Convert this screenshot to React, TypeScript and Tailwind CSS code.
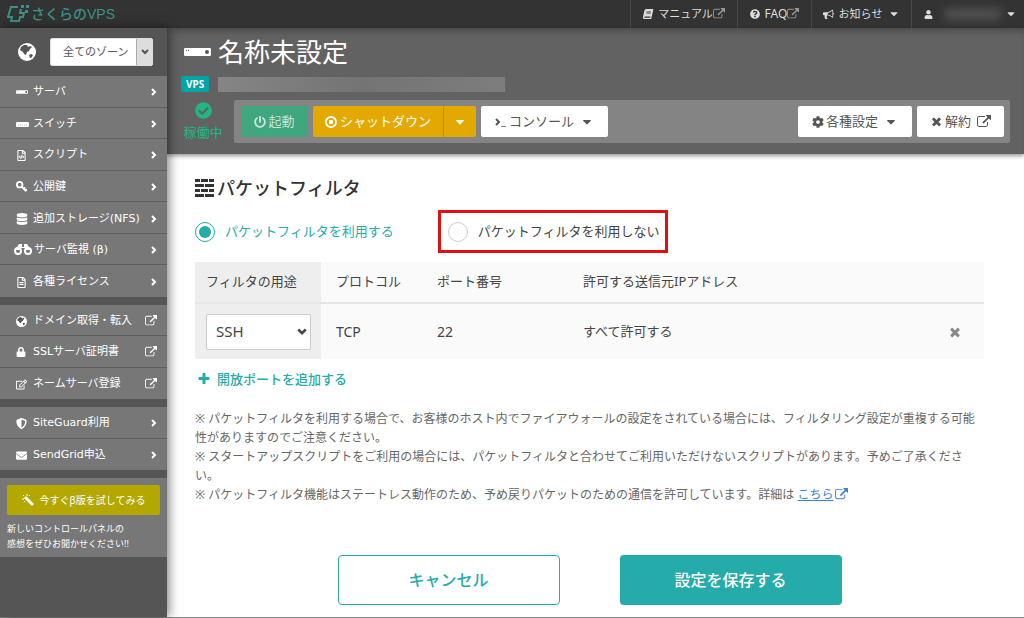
import { useState } from "react";
import type { ReactNode } from "react";
import {
  FaBook,
  FaCheckCircle,
  FaCog,
  FaDatabase,
  FaEnvelope,
  FaLock,
  FaPowerOff,
  FaQuestionCircle,
  FaRegEdit,
  FaRegFileAlt,
  FaRegFileCode,
  FaShieldAlt,
  FaUser,
} from "react-icons/fa";

interface MenuItem {
  label: string;
  icon: ReactNode;
  external?: boolean;
}

interface IconProps {
  className?: string;
}

const glyphs = {
  external:
    "M1408 928v320q0 119-84.5 203.5t-203.5 84.5h-832q-119 0-203.5-84.5t-84.5-203.5v-832q0-119 84.5-203.5t203.5-84.5h704q14 0 23 9t9 23v64q0 14-9 23t-23 9h-704q-66 0-113 47t-47 113v832q0 66 47 113t113 47h832q66 0 113-47t47-113v-320q0-14 9-23t23-9h64q14 0 23 9t9 23zm384-864v512q0 26-19 45t-45 19-45-19l-176-176-652 652q-10 10-23 10t-23-10l-114-114q-10-10-10-23t10-23l652-652-176-176q-19-19-19-45t19-45 45-19h512q26 0 45 19t19 45z",
  times:
    "M1490 1322q0 40-28 68l-136 136q-28 28-68 28t-68-28l-294-294-294 294q-28 28-68 28t-68-28l-136-136q-28-28-28-68t28-68l294-294-294-294q-28-28-28-68t28-68l136-136q28-28 68-28t68 28l294 294 294-294q28-28 68-28t68 28l136 136q28 28 28 68t-28 68l-294 294 294 294q28 28 28 68z",
  plus: "M1600 736v192q0 40-28 68t-68 28h-416v416q0 40-28 68t-68 28h-192q-40 0-68-28t-28-68v-416h-416q-40 0-68-28t-28-68v-192q0-40 28-68t68-28h416v-416q0-40 28-68t68-28h192q40 0 68 28t28 68v416h416q40 0 68 28t28 68z",
  caret: "M1408 704q0 26-19 45l-448 448q-19 19-45 19t-45-19l-448-448q-19-19-19-45t19-45 45-19h896q26 0 45 19t19 45z",
  bullhorn:
    "M1664 640q53 0 90.5 37.5t37.5 90.5-37.5 90.5-90.5 37.5v384q0 52-38 90t-90 38q-417-347-812-380-58 19-91 66t-31 100.5 40 92.5q-20 33-23 65.5t6 58 33.5 55 48 50 61.5 50.5q-29 58-111.5 83t-168.5 11.5-132-55.5q-7-23-29.5-87.5t-32-94.5-23-89-15-101 3.5-98.5 22-110.5h-122q-66 0-113-47t-47-113v-192q0-66 47-113t113-47h480q435 0 896-384 52 0 90 38t38 90v384zm-128 604v-954q-394 302-768 343v270q377 42 768 341z",
};

function Glyph({ name, className }: { name: keyof typeof glyphs; className?: string }) {
  return (
    <svg viewBox="0 0 1792 1792" fill="currentColor" className={className} aria-hidden="true">
      <path d={glyphs[name]} />
    </svg>
  );
}

function GlobeIcon({ className }: IconProps) {
  return (
    <svg viewBox="0 0 18 18" className={className} aria-hidden="true">
      <circle cx="9" cy="9" r="9" fill="#fff" />
      <path d="M3 4l3-2 3 0 1 2 2-1 2 1-2 2-1 2-2 1-1 3-2-1-1-2-3-2zM11 12l2-1 2 1-2 3-1 0z" fill="#555" />
    </svg>
  );
}

function BinocularsIcon({ className }: IconProps) {
  return (
    <svg viewBox="0 0 18 12" className={className} aria-hidden="true">
      <path d="M3 3l2-3h3v3h2V0h3l2 3 2 3h-6V4H7v2H1z" fill="#fff" />
      <circle cx="4" cy="7" r="3" fill="none" stroke="#fff" strokeWidth="2" />
      <circle cx="14" cy="7" r="3" fill="none" stroke="#fff" strokeWidth="2" />
    </svg>
  );
}

function KeyIcon({ className }: IconProps) {
  return (
    <svg viewBox="0 0 12 12" fill="none" stroke="#fff" className={className} aria-hidden="true">
      <circle cx="4" cy="4" r="3" strokeWidth="2" />
      <path d="M6 6l5 5M8 9l2-2M10 11l2-2" strokeWidth="2" />
    </svg>
  );
}

function MagicIcon({ className }: IconProps) {
  return (
    <svg viewBox="0 0 12 12" stroke="#fff" className={className} aria-hidden="true">
      <path d="M3 3l8 8" strokeWidth="3" />
      <path d="M1 1l1 1M5 0v2M0 5h2M2 8l1-1M7 2l1-1" />
    </svg>
  );
}

function ServerIcon({ className }: IconProps) {
  return (
    <svg viewBox="0 0 27 8" className={className} aria-hidden="true">
      <rect width="27" height="8" rx="1" fill="#fff" />
      <path d="M2 2h1v1H2zM4 2h1v1H4z" fill="#666" />
      <circle cx="23" cy="4" r="2" fill="#555" />
    </svg>
  );
}

function SwitchIcon({ className }: IconProps) {
  return (
    <svg viewBox="0 0 13 6" className={className} aria-hidden="true">
      <rect width="13" height="5" y="1" rx="1" fill="#fff" />
      <path d="M2 4h9" stroke="#bbb" strokeDasharray="1 1" />
    </svg>
  );
}

function BricksIcon({ className }: IconProps) {
  return (
    <svg viewBox="0 0 19 18" fill="#333" className={className} aria-hidden="true">
      <path d="M0 0h5v3H0zM6 0h7v3H6zM14 0h5v3h-5zM0 5h9v3H0zM10 5h9v3h-9zM0 10h5v3H0zM6 10h7v3H6zM14 10h5v3h-5zM0 15h9v3H0zM10 15h9v3h-9z" />
    </svg>
  );
}

function ChevronIcon({ className }: IconProps) {
  return (
    <svg viewBox="0 0 6 8" fill="none" stroke="currentColor" strokeWidth="2" className={className} aria-hidden="true">
      <path d="M1 1l3 3-3 3" />
    </svg>
  );
}

function LogoMark() {
  return (
    <svg viewBox="0 0 22 18" className="h-[18px] w-[22px]" aria-hidden="true">
      <path d="M11 2H4L1 12h4l-1 4h8l1-4h3l1-4h-4l1-4" fill="none" stroke="#3a9188" strokeWidth="2" />
      <path d="M14 0h3v3h-3zM19 0h3v3h-3zM18 5h3v3h-3z" fill="#3a9188" />
    </svg>
  );
}

const serviceMenu: MenuItem[] = [
  { label: "サーバ", icon: <ServerIcon className="h-1 w-3" /> },
  { label: "スイッチ", icon: <SwitchIcon className="h-[6px] w-[13px]" /> },
  { label: "スクリプト", icon: <FaRegFileCode /> },
  { label: "公開鍵", icon: <KeyIcon className="size-[11px]" /> },
  { label: "追加ストレージ(NFS)", icon: <FaDatabase className="size-3" /> },
  { label: "サーバ監視 (β)", icon: <BinocularsIcon className="-ml-[2px] h-3 w-[18px]" /> },
  { label: "各種ライセンス", icon: <FaRegFileAlt /> },
];

const domainMenu: MenuItem[] = [
  { label: "ドメイン取得・転入", icon: <GlobeIcon className="size-[11px]" />, external: true },
  { label: "SSLサーバ証明書", icon: <FaLock className="size-[10px]" />, external: true },
  { label: "ネームサーバ登録", icon: <FaRegEdit />, external: true },
];

const partnerMenu: MenuItem[] = [
  { label: "SiteGuard利用", icon: <FaShieldAlt /> },
  { label: "SendGrid申込", icon: <FaEnvelope /> },
];

function MenuGroup({ items, className }: { items: MenuItem[]; className: string }) {
  return (
    <ul className={`grid auto-rows-fr divide-y divide-[#5e5e5e] bg-[#777] ${className}`}>
      {items.map((item) => (
        <li key={item.label}>
          <a href="#" className="flex h-full items-center gap-[2px] pt-[2px] pr-[10px] pl-4 text-white">
            <span className="flex min-w-[15px] items-center text-[11px]">{item.icon}</span>
            <span className="grow font-['DejaVu_Sans','Noto_Sans_CJK_JP',sans-serif] text-[11px] leading-4 whitespace-nowrap">
              {item.label}
            </span>
            {item.external ? <Glyph name="external" className="size-3" /> : <ChevronIcon className="h-2 w-[6px]" />}
          </a>
        </li>
      ))}
    </ul>
  );
}

function Sidebar() {
  return (
    <aside className="z-10 flex w-[167px] shrink-0 flex-col gap-2 bg-[#555] shadow-[2px_0_10px_rgba(0,0,0,0.5)]">
      <div>
        <div className="flex h-12 items-center gap-[14px] pl-[18px]">
          <GlobeIcon className="size-[18px]" />
          <button type="button" className="flex h-7 w-[103px] items-stretch rounded-xs border border-[#ddd] bg-white text-[11px] text-[#555]">
            <span className="flex grow items-center pl-3">全てのゾーン</span>
            <span className="flex w-4 items-center justify-center border-l border-[#aaa] bg-[#ddd]">
              <ChevronIcon className="h-2 w-[6px] rotate-90" />
            </span>
          </button>
        </div>
        <MenuGroup items={serviceMenu} className="h-[221px]" />
      </div>
      <MenuGroup items={domainMenu} className="h-[94px]" />
      <MenuGroup items={partnerMenu} className="h-[63px]" />
      <div className="bg-[#777] px-[7px] pt-[7px] pb-[6px] text-white">
        <button type="button" className="flex h-[30px] w-full items-center justify-center gap-[6px] rounded-xs bg-[#b4a800] text-[10px]">
          <MagicIcon className="size-3" />
          今すぐβ版を試してみる
        </button>
        <p className="pt-[6px] text-[9px] leading-[15px] whitespace-nowrap">
          新しいコントロールパネルの
          <br />
          感想をぜひお聞かせください!!
        </p>
      </div>
    </aside>
  );
}

function TopBar() {
  return (
    <header className="flex h-7 shrink-0 items-stretch justify-between bg-[#333] text-[#ddd]">
      <a href="#" className="flex items-center gap-[2px] pl-[7px] text-[#3a9188]">
        <LogoMark />
        <span className="font-['Liberation_Sans','Noto_Sans_CJK_JP',sans-serif] text-[14px] leading-5 font-medium">さくらのVPS</span>
      </a>
      <nav className="flex text-[12px]">
        <a href="#" className="flex w-[107px] items-center justify-center border-l border-[#484848]">
          <FaBook className="mr-[5px] size-[10px] -skew-x-12" />
          <span className="text-[11px]">マニュアル</span>
          <Glyph name="external" className="size-3 text-[#999]" />
        </a>
        <a href="#" className="flex w-[74px] items-center justify-center border-l border-[#484848]">
          <FaQuestionCircle className="mr-[5px] size-[10px]" />
          FAQ
          <Glyph name="external" className="size-3 text-[#999]" />
        </a>
        <button type="button" className="flex w-[100px] items-center justify-center border-l border-[#484848]">
          <Glyph name="bullhorn" className="mr-[5px] size-[11px]" />
          <span className="text-[11px]">お知らせ</span>
          <Glyph name="caret" className="ml-[6px] size-3" />
        </button>
        <button type="button" aria-label="アカウント" className="flex w-[113px] items-center border-l border-[#484848] pl-3">
          <FaUser className="size-[9px]" />
          <span className="ml-3 h-3 w-14 bg-[#505050] blur-xs" />
          <Glyph name="caret" className="ml-1 size-3" />
        </button>
      </nav>
    </header>
  );
}

function ServerHeader() {
  return (
    <section className="bg-[#626262] pr-[14px] pb-[11px] pl-[14px] shadow-[0_2px_4px_rgba(0,0,0,0.4),inset_0_8px_8px_-6px_rgba(0,0,0,0.3)]">
      <h1 className="flex h-12 items-center gap-[7px] pl-[3px] text-[26px] text-white">
        <ServerIcon className="h-2 w-[27px]" />
        名称未設定
      </h1>
      <div className="flex h-4 items-center gap-[9px]">
        <span className="rounded-xs bg-[#00a5a9] px-[5px] text-[10px] leading-4 font-bold text-white">VPS</span>
        <span className="h-[15px] w-[287px] bg-linear-to-r from-[#858585] via-[#747474] to-[#7d7d7d]" />
      </div>
      <div className="flex items-center gap-[9px] pt-2">
        <p className="flex w-11 flex-col items-center text-[13px] leading-[18px] text-[#20b880]">
          <FaCheckCircle className="mb-1 size-[17px]" />
          稼働中
        </p>
        <div className="flex min-w-0 grow items-center justify-between rounded-xs bg-[#848484] py-[6px] pr-[6px] pl-[7px] text-[13px] text-[#555]">
          <div className="flex gap-[5px]">
            <button type="button" className="flex h-[31px] w-[67px] items-center justify-center gap-[2px] rounded-xs bg-[#3fa67e] text-white/70">
              <FaPowerOff className="size-3" />
              起動
            </button>
            <div className="flex h-[31px] divide-x divide-[#b98c00] overflow-hidden rounded-xs bg-[#e4a900] text-white">
              <button type="button" className="flex w-[131px] items-center justify-center gap-[3px]">
                <svg viewBox="0 0 12 12" className="size-3" aria-hidden="true">
                  <circle cx="6" cy="6" r="5" fill="none" stroke="#fff" strokeWidth="2" />
                  <rect x="4" y="4" width="4" height="4" rx="1" fill="#fff" />
                </svg>
                シャットダウン
              </button>
              <button type="button" aria-label="シャットダウンメニュー" className="flex w-8 items-center justify-center">
                <Glyph name="caret" className="size-[14px]" />
              </button>
            </div>
            <button type="button" className="flex h-[31px] w-[127px] items-center justify-center rounded-xs bg-white">
              <ChevronIcon className="h-2 w-[6px]" />
              <span className="text-[11px]">_</span>
              <span className="ml-[3px]">コンソール</span>
              <Glyph name="caret" className="ml-[6px] size-[14px]" />
            </button>
          </div>
          <div className="flex gap-[5px]">
            <button type="button" className="flex h-[31px] w-[114px] items-center justify-center rounded-xs bg-white">
              <FaCog className="mr-[2px] size-3" />
              各種設定
              <Glyph name="caret" className="ml-[6px] size-[14px]" />
            </button>
            <button type="button" className="flex h-[31px] w-[87px] items-center justify-center rounded-xs bg-white">
              <Glyph name="times" className="mr-[2px] size-[13px]" />
              解約
              <Glyph name="external" className="ml-[6px] size-[14px]" />
            </button>
          </div>
        </div>
      </div>
    </section>
  );
}

const radioClass =
  "size-5 shrink-0 appearance-none rounded-full border border-[#ccc] bg-white checked:border-[#25abaa] checked:bg-[#25abaa] checked:bg-clip-content checked:p-[3px]";

function PacketFilter() {
  const [useFilter, setUseFilter] = useState(true);
  const [purpose, setPurpose] = useState("SSH");

  return (
    <main className="pt-5 pr-10 pl-7 text-[13px] text-[#444]">
      <h2 className="flex items-center gap-[3px] text-[18px] leading-7 font-medium text-[#333]">
        <BricksIcon className="h-[18px] w-[19px]" />
        パケットフィルタ
      </h2>

      <div className="flex items-center gap-11 pt-2">
        <label className={`flex items-center gap-[10px] ${useFilter ? "text-[#25abaa]" : ""}`}>
          <input type="radio" name="packet-filter" className={radioClass} checked={useFilter} onChange={() => setUseFilter(true)} />
          パケットフィルタを利用する
        </label>
        <label className={`flex h-[43px] items-center gap-[10px] border-3 border-[#e01010] pr-[5px] pl-[7px] whitespace-nowrap ${useFilter ? "" : "text-[#25abaa]"}`}>
          <input type="radio" name="packet-filter" className={radioClass} checked={!useFilter} onChange={() => setUseFilter(false)} />
          パケットフィルタを利用しない
        </label>
      </div>

      <table className="mt-[9px] w-full table-fixed bg-[#fafafa] text-left">
        <colgroup>
          <col className="w-[126px] bg-[#eee]" />
          <col className="w-[101px]" />
          <col className="w-[146px]" />
          <col />
          <col className="w-[58px]" />
        </colgroup>
        <thead>
          <tr className="h-[41px] border-b-2 border-[#e6e6e6]">
            <th className="pl-[11px] font-normal">フィルタの用途</th>
            <th className="pl-[15px] font-normal">プロトコル</th>
            <th className="pl-[15px] font-normal">ポート番号</th>
            <th className="pl-[15px] font-normal">許可する送信元IPアドレス</th>
            <td />
          </tr>
        </thead>
        <tbody>
          <tr className="h-14">
            <td className="pr-[10px] pl-[11px]">
              <div className="relative">
                <select
                  aria-label="フィルタの用途"
                  value={purpose}
                  onChange={(e) => setPurpose(e.target.value)}
                  className="h-9 w-full appearance-none rounded-xs border border-[#ccc] bg-white pl-[9px] text-[15px]"
                >
                  <option>SSH</option>
                  <option>Web</option>
                  <option>FTP</option>
                </select>
                <ChevronIcon className="pointer-events-none absolute top-[13px] right-[5px] h-[10px] w-2 rotate-90" />
              </div>
            </td>
            <td className="pl-[15px] text-[14px]">TCP</td>
            <td className="pl-[15px] text-[14px]">22</td>
            <td className="pl-[15px]">すべて許可する</td>
            <td>
              <button type="button" aria-label="削除" className="flex w-full justify-center text-[#888]">
                <Glyph name="times" className="size-[14px]" />
              </button>
            </td>
          </tr>
        </tbody>
      </table>

      <button type="button" className="mt-[10px] flex items-center gap-[6px] pl-[2px] leading-5 font-medium text-[#25abaa]">
        <Glyph name="plus" className="size-[14px]" />
        開放ポートを追加する
      </button>

      <p className="mt-5 text-[12px] leading-[19px] text-[#666]">
        ※ パケットフィルタを利用する場合で、お客様のホスト内でファイアウォールの設定をされている場合には、フィルタリング設定が重複する可能性がありますのでご注意ください。
        <br />
        ※ スタートアップスクリプトをご利用の場合には、パケットフィルタと合わせてご利用いただけないスクリプトがあります。予めご了承ください。
        <br />※ パケットフィルタ機能はステートレス動作のため、予め戻りパケットのための通信を許可しています。詳細は{" "}
        <a href="#" className="text-[#3880d8]">
          <span className="underline">こちら</span>
          <Glyph name="external" className="ml-px inline size-[13px] align-[-2px]" />
        </a>
      </p>

      <div className="flex justify-center gap-[60px] pt-[51px] pb-3 text-[16px] font-medium">
        <button type="button" className="h-[50px] w-[222px] rounded-sm border border-[#25abaa] bg-white text-[#25abaa]">
          キャンセル
        </button>
        <button type="button" className="h-[50px] w-[222px] rounded-sm bg-[#25abaa] text-white">
          設定を保存する
        </button>
      </div>
    </main>
  );
}

export default function App() {
  return (
    <div className="flex min-h-screen flex-col border-b border-[#888] bg-white font-['Noto_Sans','Noto_Sans_CJK_JP',sans-serif]">
      <TopBar />
      <div className="flex grow">
        <Sidebar />
        <div className="min-w-0 grow">
          <ServerHeader />
          <PacketFilter />
        </div>
      </div>
    </div>
  );
}
